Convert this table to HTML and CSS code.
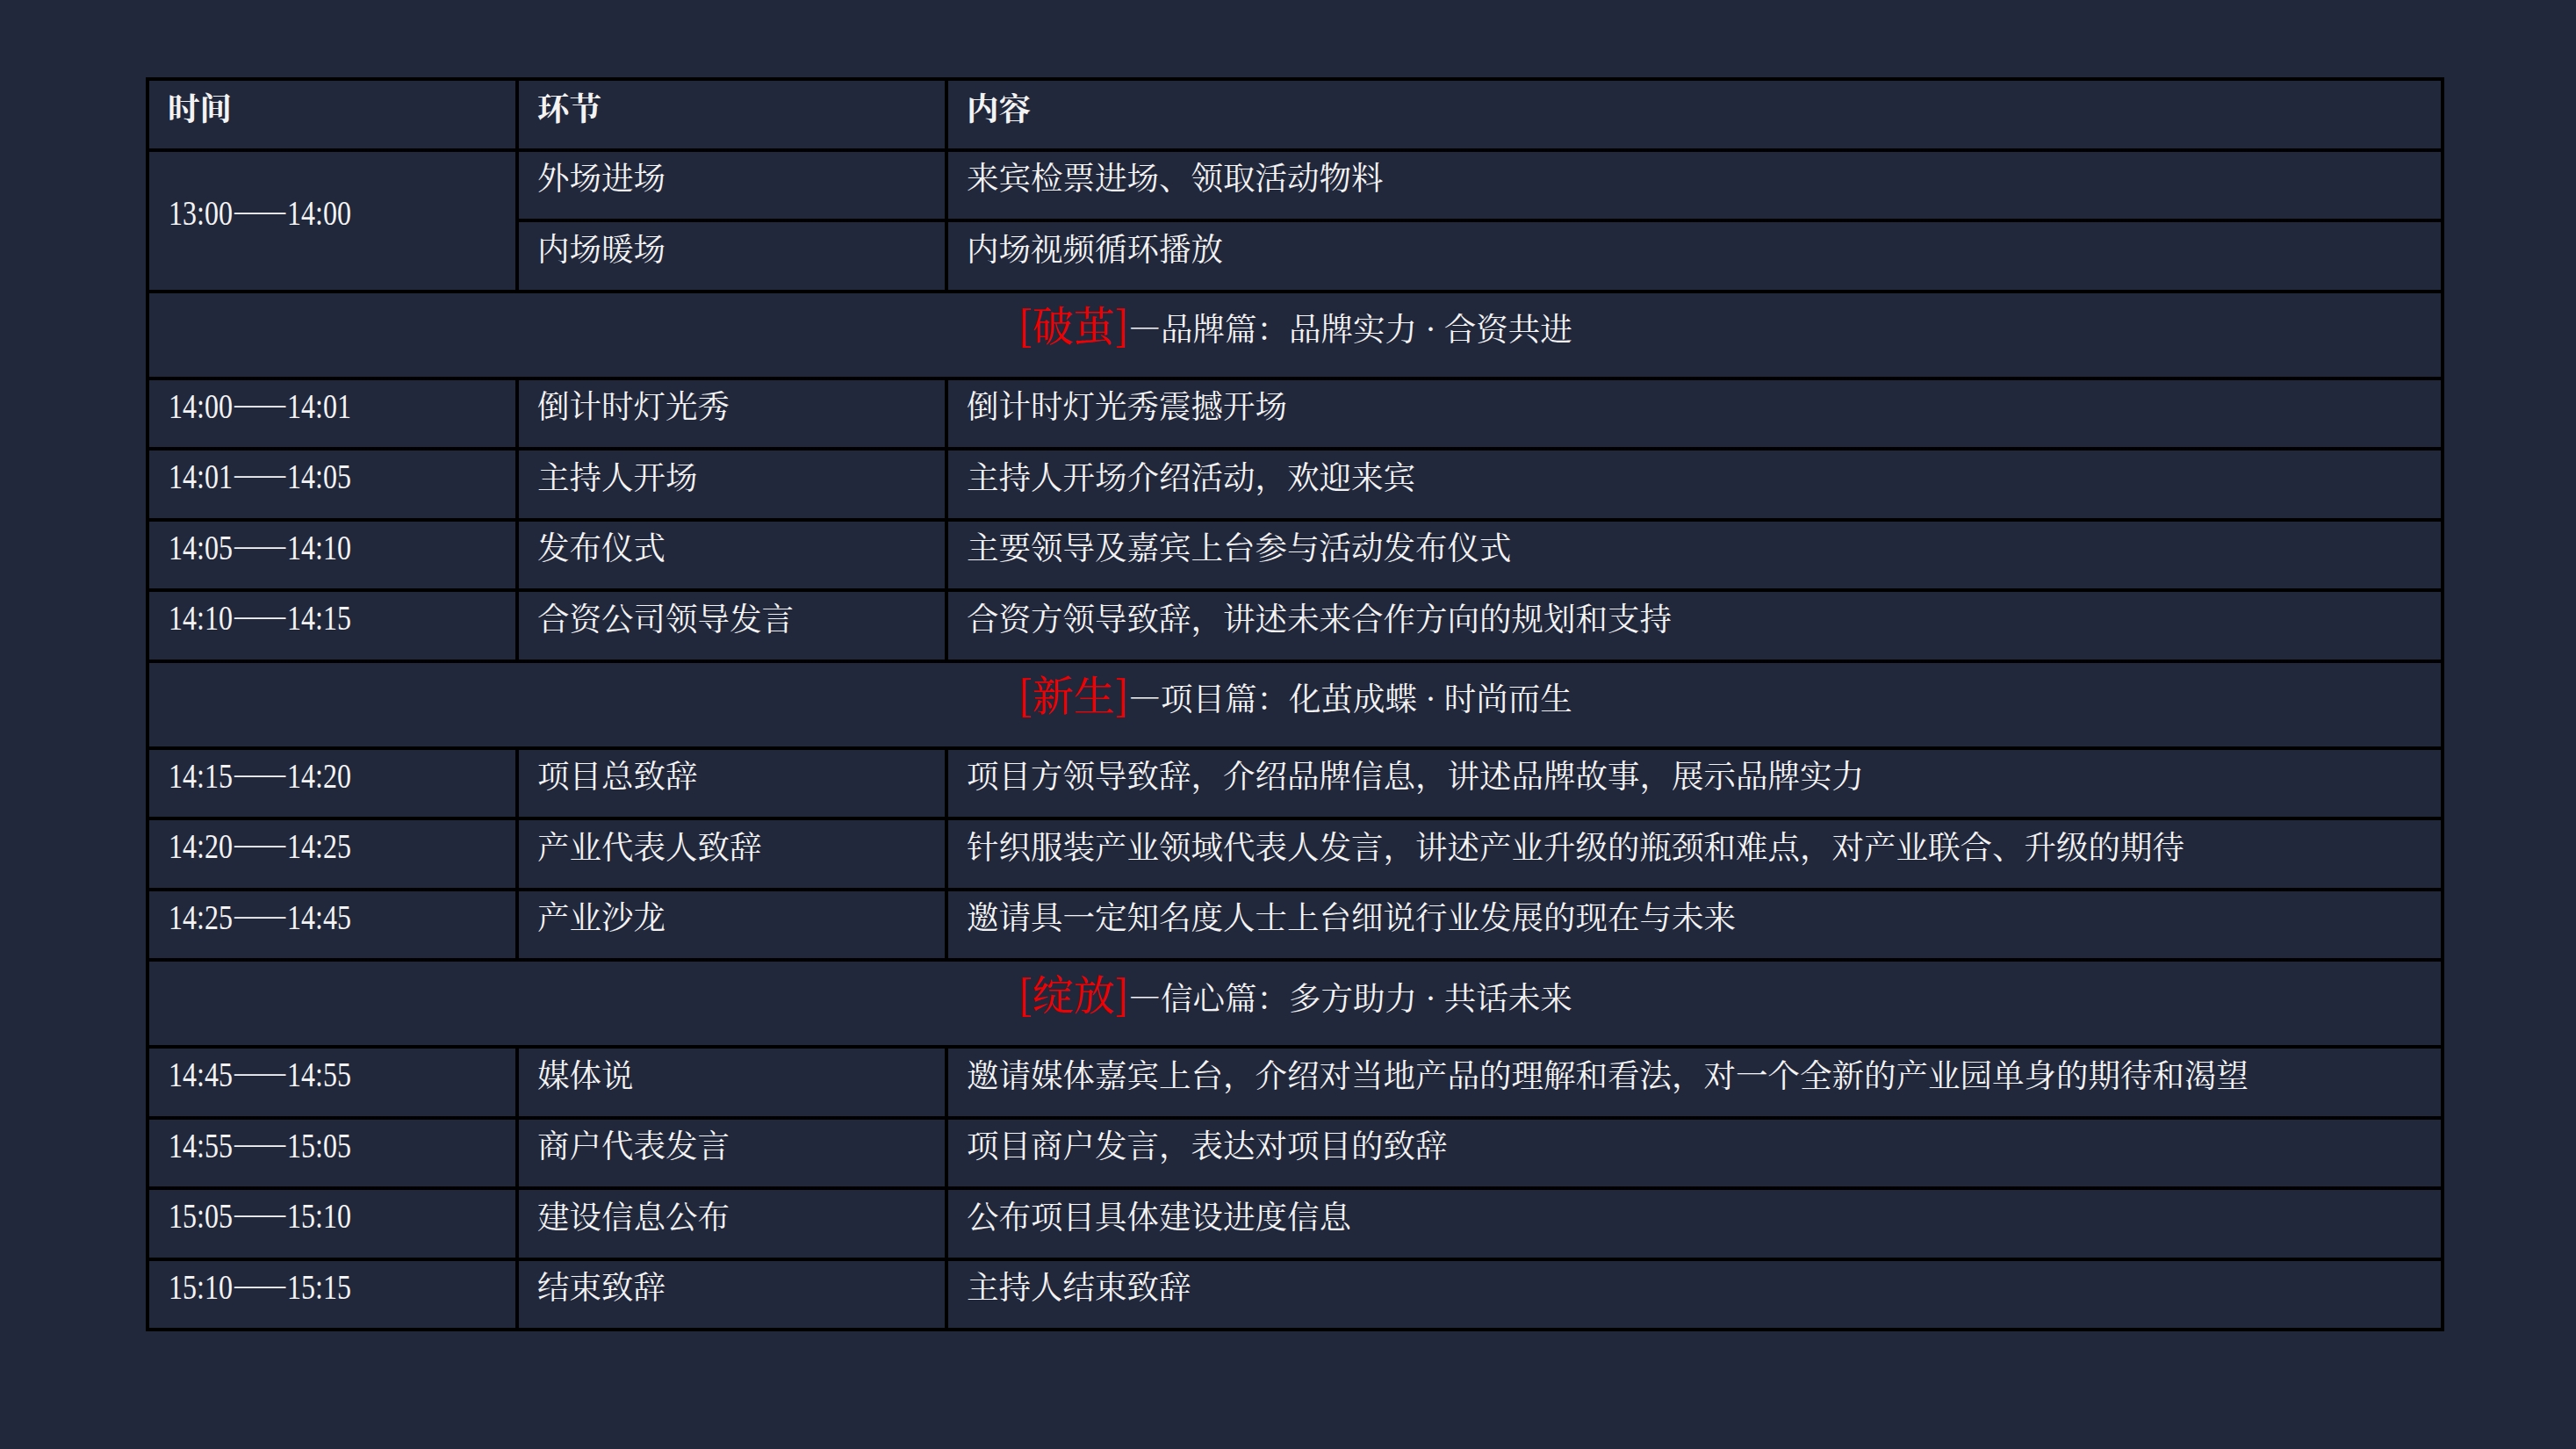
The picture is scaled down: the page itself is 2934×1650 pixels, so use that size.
FILE: index.html
```html
<!DOCTYPE html>
<html lang="zh-CN">
<head>
<meta charset="utf-8">
<title>活动流程</title>
<link rel="stylesheet" href="styles.css">
</head>
<body>
<table class="schedule">
  <colgroup>
    <col class="c-time">
    <col class="c-item">
    <col class="c-content">
  </colgroup>
  <thead>
    <tr>
      <th>时间</th>
      <th>环节</th>
      <th>内容</th>
    </tr>
  </thead>
  <tbody>
    <tr>
      <td class="time" rowspan="2"><span class="hm">13:00</span>——<span class="hm">14:00</span></td>
      <td>外场进场</td>
      <td>来宾检票进场、领取活动物料</td>
    </tr>
    <tr>
      <td>内场暖场</td>
      <td>内场视频循环播放</td>
    </tr>
    <tr class="section">
      <td colspan="3"><span class="tag">[破茧]</span>—品牌篇：品牌实力 · 合资共进</td>
    </tr>
    <tr>
      <td class="time"><span class="hm">14:00</span>——<span class="hm">14:01</span></td>
      <td>倒计时灯光秀</td>
      <td>倒计时灯光秀震撼开场</td>
    </tr>
    <tr>
      <td class="time"><span class="hm">14:01</span>——<span class="hm">14:05</span></td>
      <td>主持人开场</td>
      <td>主持人开场介绍活动，欢迎来宾</td>
    </tr>
    <tr>
      <td class="time"><span class="hm">14:05</span>——<span class="hm">14:10</span></td>
      <td>发布仪式</td>
      <td>主要领导及嘉宾上台参与活动发布仪式</td>
    </tr>
    <tr>
      <td class="time"><span class="hm">14:10</span>——<span class="hm">14:15</span></td>
      <td>合资公司领导发言</td>
      <td>合资方领导致辞，讲述未来合作方向的规划和支持</td>
    </tr>
    <tr class="section">
      <td colspan="3"><span class="tag">[新生]</span>—项目篇：化茧成蝶 · 时尚而生</td>
    </tr>
    <tr>
      <td class="time"><span class="hm">14:15</span>——<span class="hm">14:20</span></td>
      <td>项目总致辞</td>
      <td>项目方领导致辞，介绍品牌信息，讲述品牌故事，展示品牌实力</td>
    </tr>
    <tr>
      <td class="time"><span class="hm">14:20</span>——<span class="hm">14:25</span></td>
      <td>产业代表人致辞</td>
      <td>针织服装产业领域代表人发言，讲述产业升级的瓶颈和难点，对产业联合、升级的期待</td>
    </tr>
    <tr>
      <td class="time"><span class="hm">14:25</span>——<span class="hm">14:45</span></td>
      <td>产业沙龙</td>
      <td>邀请具一定知名度人士上台细说行业发展的现在与未来</td>
    </tr>
    <tr class="section">
      <td colspan="3"><span class="tag">[绽放]</span>—信心篇：多方助力 · 共话未来</td>
    </tr>
    <tr>
      <td class="time"><span class="hm">14:45</span>——<span class="hm">14:55</span></td>
      <td>媒体说</td>
      <td>邀请媒体嘉宾上台，介绍对当地产品的理解和看法，对一个全新的产业园单身的期待和渴望</td>
    </tr>
    <tr>
      <td class="time"><span class="hm">14:55</span>——<span class="hm">15:05</span></td>
      <td>商户代表发言</td>
      <td>项目商户发言，表达对项目的致辞</td>
    </tr>
    <tr>
      <td class="time"><span class="hm">15:05</span>——<span class="hm">15:10</span></td>
      <td>建设信息公布</td>
      <td>公布项目具体建设进度信息</td>
    </tr>
    <tr>
      <td class="time"><span class="hm">15:10</span>——<span class="hm">15:15</span></td>
      <td>结束致辞</td>
      <td>主持人结束致辞</td>
    </tr>
  </tbody>
</table>
</body>
</html>
```

FILE: styles.css
```css
html, body {
  margin: 0;
  padding: 0;
  background: #22283c;
}

body {
  padding: 88px 0 0 166px;
}

.schedule {
  width: 2618px;
  border-collapse: collapse;
  table-layout: fixed;
  color: #f3f3f3;
  font-family: "Noto Serif CJK SC", "Noto Sans CJK SC", serif;
  font-size: 36.5px;
  line-height: 1.2;
}

.c-time { width: 421px; }
.c-item { width: 489px; }
.c-content { width: auto; }

.schedule th,
.schedule td {
  border: 4px solid #000;
  height: 57.5px;
  padding: 0 21px 19px 21px;
  text-align: left;
  vertical-align: middle;
  white-space: nowrap;
}

.schedule td.time {
  padding-left: 22px;
}

.schedule th {
  font-weight: 700;
  height: 60.5px;
  padding-bottom: 16px;
}

.schedule .section td {
  height: 70px;
  padding: 0 0 25px 0;
  text-align: center;
}

.tag {
  color: #f00000;
  font-size: 47px;
}

.hm {
  display: inline-block;
  font-family: "Liberation Serif", serif;
  font-size: 40px;
  transform: scaleX(0.8);
  transform-origin: left center;
  margin-right: -18px;
  vertical-align: -3px;
}
```
